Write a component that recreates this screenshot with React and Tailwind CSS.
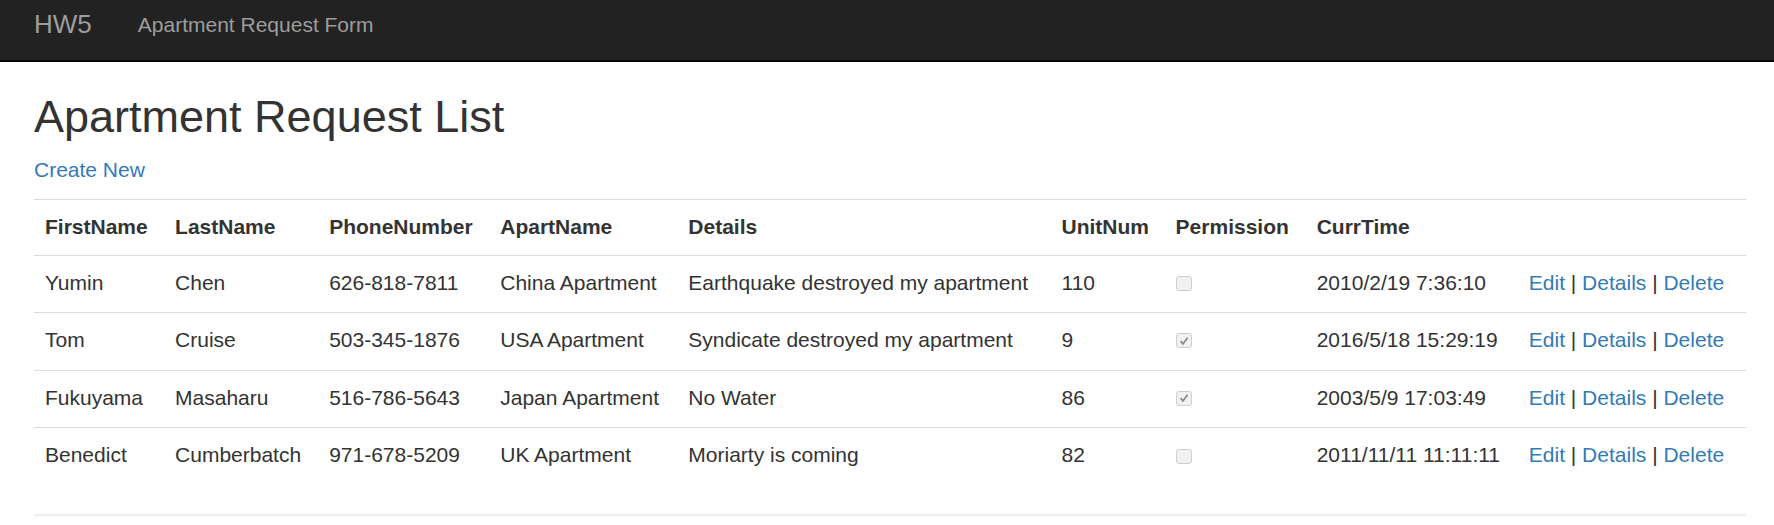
const requests = [
  { first: 'Yumin', last: 'Chen', phone: '626-818-7811', apart: 'China Apartment', details: 'Earthquake destroyed my apartment', unit: '110', permission: false, time: '2010/2/19 7:36:10' },
  { first: 'Tom', last: 'Cruise', phone: '503-345-1876', apart: 'USA Apartment', details: 'Syndicate destroyed my apartment', unit: '9', permission: true, time: '2016/5/18 15:29:19' },
  { first: 'Fukuyama', last: 'Masaharu', phone: '516-786-5643', apart: 'Japan Apartment', details: 'No Water', unit: '86', permission: true, time: '2003/5/9 17:03:49' },
  { first: 'Benedict', last: 'Cumberbatch', phone: '971-678-5209', apart: 'UK Apartment', details: 'Moriarty is coming', unit: '82', permission: false, time: '2011/11/11 11:11:11' },
];

const headers = ['FirstName', 'LastName', 'PhoneNumber', 'ApartName', 'Details', 'UnitNum', 'Permission', 'CurrTime', ''];
const widths = [130, 154, 171, 188, 373, 114, 141, 212, 228];

function CheckBox({ checked }) {
  return (
    <span className="inline-flex w-[16px] h-[15px] items-center justify-center rounded-[3px] border border-[#cfcfcf] bg-[#f1f1f1] align-middle">
      {checked && (
        <svg width="10" height="10" viewBox="0 0 10 10">
          <path d="M1.5 5.2 L4 7.8 L8.6 1.8" fill="none" stroke="#8c8c8c" strokeWidth="1.8" />
        </svg>
      )}
    </span>
  );
}

export default function App() {
  return (
    <div className="min-h-[525px] bg-white text-[#333] font-['Liberation_Sans',Arial,sans-serif]">
      <div className="h-[62px] bg-[#222] border-b-2 border-[#080808] flex items-center pl-[34px] pb-[12px]">
        <span className="text-[26px] text-[#9d9d9d] leading-none">HW5</span>
        <span className="ml-[46px] text-[21px] text-[#9d9d9d] leading-none">Apartment Request Form</span>
      </div>

      <div className="pl-[34px] pr-[28px]">
        <h2 className="mt-[30px] text-[45px] leading-[1.1] font-normal">Apartment Request List</h2>
        <p className="mt-[13px] mb-[14px] text-[21px] leading-[30px]">
          <a href="#" className="text-[#337ab7]">Create New</a>
        </p>

        <table className="w-full table-fixed border-collapse text-[21px]">
          <colgroup>
            {widths.map((w, i) => (
              <col key={i} style={{ width: w }} />
            ))}
          </colgroup>
          <thead>
            <tr className="h-[56px] border-y border-[#ddd]">
              {headers.map((h, i) => (
                <th key={i} className="px-[11px] text-left font-bold whitespace-nowrap">{h}</th>
              ))}
            </tr>
          </thead>
          <tbody>
            {requests.map((r, i) => (
              <tr key={i} className={`h-[57.5px] ${i > 0 ? 'border-t border-[#ddd]' : ''}`}>
                <td className="px-[11px] pb-[3px] whitespace-nowrap">{r.first}</td>
                <td className="px-[11px] pb-[3px] whitespace-nowrap">{r.last}</td>
                <td className="px-[11px] pb-[3px] whitespace-nowrap">{r.phone}</td>
                <td className="px-[11px] pb-[3px] whitespace-nowrap">{r.apart}</td>
                <td className="px-[11px] pb-[3px] whitespace-nowrap">{r.details}</td>
                <td className="px-[11px] pb-[3px] whitespace-nowrap">{r.unit}</td>
                <td className="px-[11px] pb-[4px]"><CheckBox checked={r.permission} /></td>
                <td className="px-[11px] pb-[3px] whitespace-nowrap">{r.time}</td>
                <td className="px-[11px] pb-[3px] whitespace-nowrap">
                  <a href="#" className="text-[#337ab7]">Edit</a> | <a href="#" className="text-[#337ab7]">Details</a> | <a href="#" className="text-[#337ab7]">Delete</a>
                </td>
              </tr>
            ))}
          </tbody>
        </table>

        <hr className="mt-[29px] border-t-2 border-[#eee]" />
      </div>
    </div>
  );
}
